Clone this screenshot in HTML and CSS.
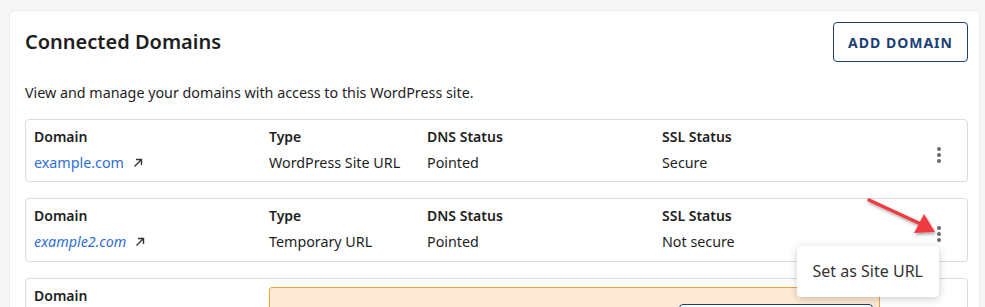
FILE: index.html
```html
<!DOCTYPE html>
<html lang="en">

<head>
    <meta charset="UTF-8">
    <meta name="viewport" content="width=device-width, initial-scale=1.0">
    <title>Connected Domains</title>
    <link rel="stylesheet" href="styles.css">
</head>

<body>
    <div class="card">
        <div class="card-header">
            <h2>Connected Domains</h2>
            <button class="add-button">Add Domain</button>
        </div>
        <p class="intro">View and manage your domains with access to this WordPress site.</p>

        <div class="domain-row">
            <div class="cell">
                <span class="label">Domain</span>
                <a class="domain-link" href="#">example.com
                    <svg class="ext" width="10" height="10" viewBox="0 0 10 10"><path d="M1.5 8.5 L8.5 1.5 M3 1.5 H8.5 V7" fill="none" stroke="#333" stroke-width="1.4"/></svg>
                </a>
            </div>
            <div class="cell"><span class="label">Type</span><span>WordPress Site URL</span></div>
            <div class="cell"><span class="label">DNS Status</span><span>Pointed</span></div>
            <div class="cell"><span class="label">SSL Status</span><span>Secure</span></div>
            <div class="kebab"><i></i><i></i><i></i></div>
        </div>

        <div class="domain-row">
            <div class="cell">
                <span class="label">Domain</span>
                <a class="domain-link temp" href="#">example2.com
                    <svg class="ext" width="10" height="10" viewBox="0 0 10 10"><path d="M1.5 8.5 L8.5 1.5 M3 1.5 H8.5 V7" fill="none" stroke="#333" stroke-width="1.4"/></svg>
                </a>
            </div>
            <div class="cell"><span class="label">Type</span><span>Temporary URL</span></div>
            <div class="cell"><span class="label">DNS Status</span><span>Pointed</span></div>
            <div class="cell"><span class="label">SSL Status</span><span>Not secure</span></div>
            <div class="kebab open">
                <i></i><i></i><i></i>
                <svg class="pointer" width="84" height="48" viewBox="0 0 84 48">
                    <defs>
                        <filter id="sh" x="-20%" y="-20%" width="140%" height="160%">
                            <feDropShadow dx="1" dy="2" stdDeviation="1.5" flood-color="#000" flood-opacity="0.35"/>
                        </filter>
                    </defs>
                    <g filter="url(#sh)">
                        <path d="M6 6 L60 31" stroke="#ef3b3f" stroke-width="3.5" stroke-linecap="round"/>
                        <path d="M72 38 L51 39 L61 20 Z" fill="#ef3b3f"/>
                    </g>
                </svg>
                <div class="menu">Set as Site URL</div>
            </div>
        </div>

        <div class="domain-row last">
            <div class="cell"><span class="label">Domain</span></div>
            <div class="notice">
                <span class="notice-btn"></span>
            </div>
        </div>
    </div>
</body>

</html>
```

FILE: styles.css
```css
body {
    margin: 0;
    padding: 10px 0 0 9px;
    background: #f6f6f6;
    font-family: "Noto Sans", "Open Sans", sans-serif;
    color: #1e1e1e;
    font-size: 14.3px;
    overflow: hidden;
    height: 297px;
}

.card {
    width: 943px;
    background: #fff;
    border: 1px solid #ececec;
    border-radius: 6px;
    padding: 11px 11px 0 15px;
}

.card-header {
    display: flex;
    justify-content: space-between;
    align-items: center;
}

h2 {
    margin: 0;
    font-size: 20px;
    font-weight: 600;
    line-height: 28px;
    color: #1e1e1e;
}

.add-button {
    height: 40px;
    width: 135px;
    background: #fff;
    border: 1px solid #1d3f75;
    border-radius: 4px;
    color: #1d3f75;
    font-family: inherit;
    font-size: 14px;
    font-weight: 700;
    letter-spacing: 1px;
    text-transform: uppercase;
}

.intro {
    margin: 20px 0 15px;
    line-height: 22px;
}

.domain-row {
    position: relative;
    display: grid;
    grid-template-columns: 235px 158px 235px 1fr 40px;
    align-items: center;
    border: 1px solid #dcdcdc;
    border-radius: 4px;
    padding: 7px 0 8px 8px;
    margin-bottom: 16px;
}

.domain-row + .domain-row {
    padding-bottom: 9px;
}

.cell {
    display: flex;
    flex-direction: column;
    gap: 6px;
    line-height: 20px;
}

.label {
    font-size: 14px;
    font-weight: 600;
}

.domain-link {
    display: flex;
    align-items: center;
    gap: 9px;
    color: #2f6fd6;
    text-decoration: none;
}

.domain-link.temp {
    font-style: italic;
}

.kebab {
    position: relative;
    display: flex;
    flex-direction: column;
    align-items: center;
    gap: 2px;
    margin-right: 16px;
    padding-top: 10px;
}

.kebab i {
    display: block;
    width: 4px;
    height: 4px;
    border-radius: 50%;
    background: #6a6a6a;
}

.pointer {
    position: absolute;
    left: -64px;
    top: -22px;
}

.menu {
    position: absolute;
    top: 30px;
    right: 12px;
    white-space: nowrap;
    background: #fff;
    border-radius: 4px;
    box-shadow: 0 2px 8px rgba(0, 0, 0, 0.2);
    padding: 14px 16px 15px;
    font-size: 16px;
    line-height: 22px;
    color: #333;
    z-index: 2;
}

.domain-row.last {
    align-items: start;
    height: 60px;
}

.notice {
    grid-column: 2 / 5;
    margin-top: 1px;
    margin-right: 47px;
    height: 80px;
    background: #fdead4;
    border: 1px solid #f0a23f;
    border-radius: 3px;
    display: flex;
    justify-content: flex-end;
    padding: 16px 6px 0 0;
}

.notice-btn {
    width: 192px;
    height: 30px;
    background: #fff;
    border: 1px solid #1d3f75;
    border-radius: 4px;
}
```
